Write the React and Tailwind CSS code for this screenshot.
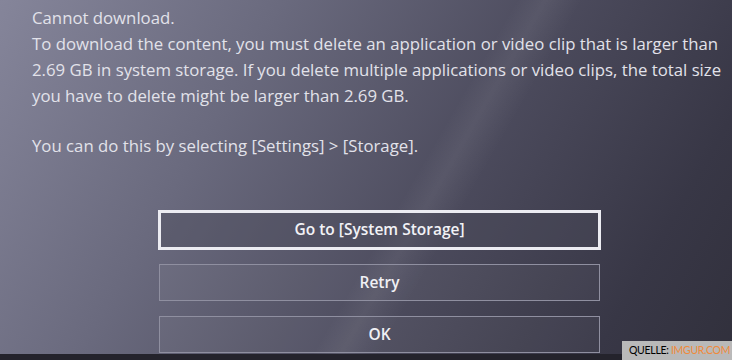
export default function App() {
  const lines = [
    'Cannot download.',
    'To download the content, you must delete an application or video clip that is larger than',
    '2.69 GB in system storage. If you delete multiple applications or video clips, the total size',
    'you have to delete might be larger than 2.69 GB.',
  ];

  return (
    <div className="relative w-[732px] h-[360px] overflow-hidden bg-[linear-gradient(120deg,#85859a_0%,#6a6a7e_30%,#4c4b5d_60%,#383746_85%,#31303c_100%)] font-['Open_Sans','Noto_Sans',sans-serif]">
      <div className="pointer-events-none absolute inset-0 bg-[linear-gradient(120deg,transparent_55%,rgba(255,255,255,0.06)_58%,transparent_62%)]" />
      <div className="relative flex flex-col h-full">
        <div className="pl-[32px] pt-[5px] text-[16.75px] leading-[26px] text-[#e2e2ea]">
          {lines.map((l) => (
            <div key={l} className="whitespace-nowrap">{l}</div>
          ))}
          <div className="h-[24px]" />
          <div>You can do this by selecting [Settings] &gt; [Storage].</div>
        </div>

        <div className="mt-[51px] pl-[158px] flex flex-col gap-[14px]">
          <button className="w-[443px] h-[40px] border-[3px] border-[#ececf2] bg-[#4a4a5a]/40 text-[#f2f2f6] text-[15.5px] font-semibold">
            Go to [System Storage]
          </button>
          <button className="ml-[1px] w-[441px] h-[37px] border border-[#8f8fa0] bg-white/[0.04] text-[#f0f0f4] text-[15.5px] font-semibold">
            Retry
          </button>
          <button className="ml-[1px] mt-[1px] w-[441px] h-[37px] border border-[#8f8fa0] bg-white/[0.04] text-[#f0f0f4] text-[15.5px] font-semibold">
            OK
          </button>
        </div>
        <div className="mt-auto h-[6px] bg-[#24232c]" />
      </div>

      <div className="absolute right-0 bottom-0 h-[19px] w-[110px] bg-[#b9b9b9] flex items-center pl-[7px] text-[10.5px] tracking-[-0.3px] font-['Lato',sans-serif] leading-none whitespace-nowrap">
        <span className="text-black">QUELLE:&nbsp;</span>
        <span className="text-[#f08a3a]">IMGUR.COM</span>
      </div>
    </div>
  );
}
